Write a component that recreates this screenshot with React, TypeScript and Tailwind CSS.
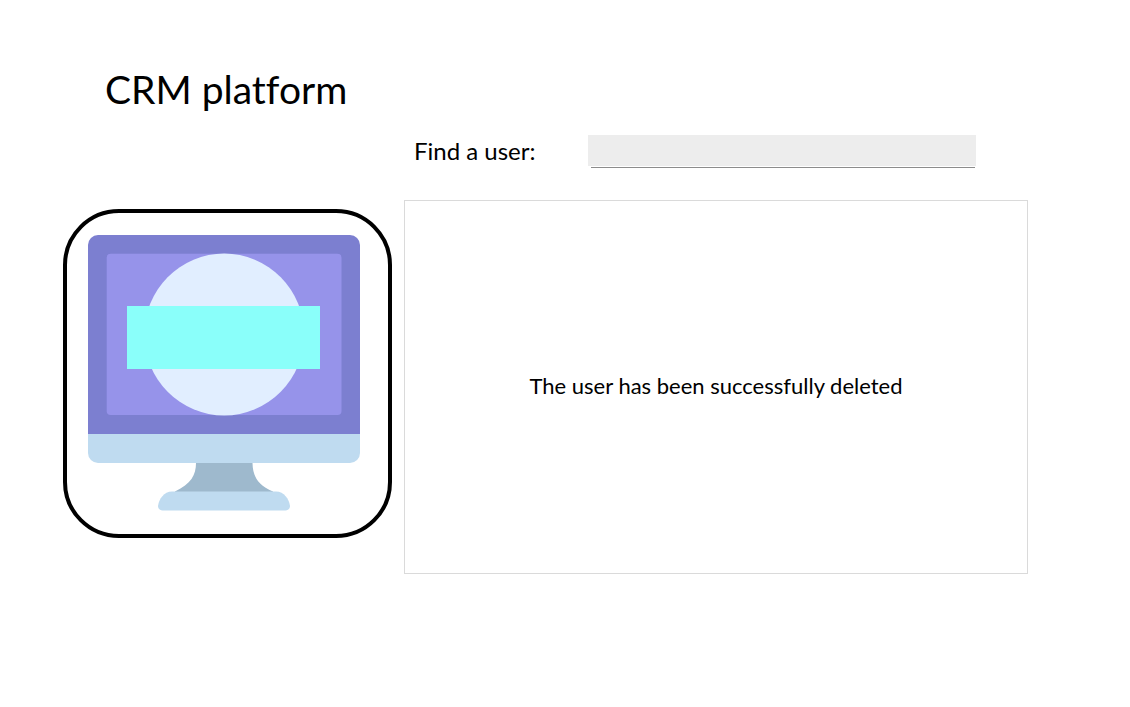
function MonitorIllustration() {
  return (
    <svg viewBox="0 0 321 321" className="block w-full" aria-hidden="true">
      <path d="M21 221V32a10 10 0 0 1 10-10H283a10 10 0 0 1 10 10V221Z" fill="#7c7fd0" />
      <path d="M21 221H293v19a10 10 0 0 1-10 10H31a10 10 0 0 1-10-10Z" fill="#bfdbf0" />
      <rect x="39.700" y="40.700" width="234.800" height="161.300" rx="4" fill="#9693ea" />
      <ellipse cx="157.200" cy="121.500" rx="80" ry="81" fill="#e1eeff" />
      <rect x="60" y="93" width="193" height="63" fill="#8afffa" />
      <path d="M129 250h56.500c.3 13 5 22 20.500 28.500v1h-98v-1C124 271 129 262 129 250Z" fill="#9eb9cd" />
      <path d="M91 293c1-7 6-14.500 14-14.500H209c8 0 13 7.500 14 14.500 0 2.500-2 4.500-4.500 4.500H95.500C93 297.500 91 295.500 91 293Z" fill="#bfdbf0" />
    </svg>
  );
}

export default function App() {
  return (
    <main className="min-h-screen bg-white pt-16 pr-[102px] pb-16 pl-[63px] font-['Lato',sans-serif] text-black [font-variant-ligatures:none]">
      <h1 className="pl-[42px] text-[39px] leading-[50px]">CRM platform</h1>
      <div className="mt-[21px] grid grid-cols-[329px_minmax(0,1fr)] gap-x-3">
        <form className="col-start-2 flex h-[65px] items-start pr-[52px] pl-[10px]">
          <label htmlFor="find-user" className="w-[174px] shrink-0 text-2xl">
            Find a user:
          </label>
          <div className="flex-1">
            <input
              id="find-user"
              type="text"
              className="block h-[31px] w-full bg-[#ededed] px-2 text-lg outline-none"
            />
            <div className="mt-px mr-px ml-[3px] h-px bg-[#8c8c8c]" />
          </div>
        </form>
        <div className="col-start-1 mt-[9px] self-start rounded-[56px] border-4 border-black">
          <MonitorIllustration />
        </div>
        <section className="flex h-[374px] items-center justify-center border border-[#dadada] pb-1">
          <p role="status" className="text-[22px]">
            The user has been successfully deleted
          </p>
        </section>
      </div>
    </main>
  );
}
